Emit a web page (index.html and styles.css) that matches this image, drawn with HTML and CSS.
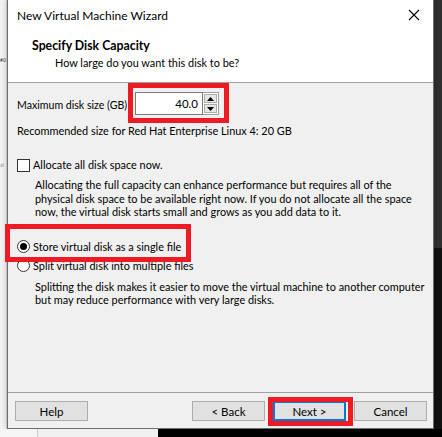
FILE: index.html
```html
<!DOCTYPE html>
<html>
<head>
<meta charset="utf-8">
<link rel="stylesheet" href="styles.css">
</head>
<body>
<div class="screen">
  <div class="bg-left"><span class="frag frag1">#0</span><span class="frag frag2">al</span></div>
  <div class="dialog">
    <div class="titlebar">
      <span class="title">New Virtual Machine Wizard</span>
      <svg class="close" width="12" height="12" viewBox="0 0 12 12"><path d="M1 1 L11 11 M11 1 L1 11" stroke="#000" stroke-width="1.1" fill="none"/></svg>
    </div>
    <div class="header">
      <div class="h-title">Specify Disk Capacity</div>
      <div class="h-sub">How large do you want this disk to be?</div>
    </div>
    <div class="content">
      <div class="row size-row">
        <span class="size-label">Maximum disk size (GB)</span>
        <div class="spinner">
          <div class="spin-input">40.0</div>
          <div class="spin-btns">
            <div class="spin-btn"><svg width="7" height="4" viewBox="0 0 7 4"><path d="M0 4 L3.5 0 L7 4 Z" fill="#000"/></svg></div>
            <div class="spin-btn"><svg width="7" height="4" viewBox="0 0 7 4"><path d="M0 0 L3.5 4 L7 0 Z" fill="#000"/></svg></div>
          </div>
        </div>
      </div>
      <div class="recommended">Recommended size for Red Hat Enterprise Linux 4: 20 GB</div>
      <label class="check-row"><span class="checkbox"></span><span>Allocate all disk space now.</span></label>
      <p class="desc desc1">Allocating the full capacity can enhance performance but requires all of the<br>physical disk space to be available right now. If you do not allocate all the space<br>now, the virtual disk starts small and grows as you add data to it.</p>
      <label class="radio-row radio1"><span class="radio checked"></span><span>Store virtual disk as a single file</span></label>
      <label class="radio-row radio2"><span class="radio"></span><span>Split virtual disk into multiple files</span></label>
      <p class="desc desc2">Splitting the disk makes it easier to move the virtual machine to another computer<br>but may reduce performance with very large disks.</p>
    </div>
    <div class="footer">
      <button class="btn">Help</button>
      <div class="spacer"></div>
      <button class="btn">&lt; Back</button>
      <button class="btn default">Next &gt;</button>
      <button class="btn">Cancel</button>
    </div>
    <div class="mark mark1"></div>
    <div class="mark mark2"></div>
    <div class="mark mark3"></div>
  </div>
  <div class="bg-right"></div>
  <div class="bg-bottom"><div class="bb-light"></div><div class="bb-dark"></div></div>
</div>
</body>
</html>
```
FILE: styles.css
```css
html, body {
  margin: 0;
  padding: 0;
}
body {
  width: 442px;
  height: 437px;
  overflow: hidden;
  font-family: Lato, "Liberation Sans", sans-serif;
  font-size: 10.9px;
  color: #000;
}
.screen {
  display: grid;
  grid-template-columns: 7px 427px 8px;
  grid-template-rows: 429px 8px;
  width: 442px;
  height: 437px;
}
.bg-left {
  grid-column: 1;
  grid-row: 1;
  background: #f3f3f3;
  border-right: 1px solid #d8d8d8;
  position: relative;
}
.frag {
  position: absolute;
  left: 0;
  font-size: 5px;
  line-height: 6px;
  color: #333;
}
.frag1 { top: 57px; }
.frag2 { top: 162px; color: #888; }
.bg-right {
  grid-column: 3;
  grid-row: 1;
  background: linear-gradient(#2f2f2f 0, #2f2f2f 248px, #111 248px);
}
.bg-bottom {
  grid-column: 1 / 4;
  grid-row: 2;
  display: flex;
}
.bb-light {
  width: 158px;
  background: #f0f0f0;
  border-left: 37px solid #f5f5f5;
  box-sizing: border-box;
  position: relative;
}
.bb-light::before {
  content: "";
  position: absolute;
  left: 0;
  top: 0;
  bottom: 0;
  width: 1px;
  background: #cfcfcf;
}
.bb-dark {
  flex: 1;
  background: #000;
}
.dialog {
  grid-column: 2;
  grid-row: 1;
  position: relative;
  display: flex;
  flex-direction: column;
  background: #f0f0f0;
  border: 1px solid #6e6e6e;
  border-top: none;
  box-sizing: border-box;
  box-shadow: 0 0 6px rgba(0,0,0,0.25);
}
.titlebar {
  height: 30px;
  background: #fff;
  display: flex;
  align-items: center;
  padding: 0 9px;
  font-size: 12px;
}
.title {
  flex: 1;
}
.close {
  margin-right: 4px;
}
.header {
  height: 53px;
  background: #fff;
  box-sizing: border-box;
  padding: 8px 0 0 24px;
  border-bottom: 1px solid #a0a0a0;
}
.h-title {
  font-weight: bold;
  font-size: 12.3px;
  line-height: 16px;
}
.h-sub {
  line-height: 16px;
  margin-top: 1px;
  padding-left: 23px;
}
.content {
  height: 310px;
  box-sizing: border-box;
  padding: 9px 0 0 9px;
  border-bottom: 1px solid #a0a0a0;
}
.row {
  display: flex;
  align-items: center;
}
.size-row {
  height: 23px;
}
.size-label {
  flex: 0 0 111px;
  min-width: 0;
  white-space: nowrap;
  padding-top: 3px;
  font-size: 10.6px;
}
.spinner {
  display: flex;
  margin-left: 7px;
  height: 23px;
}
.spin-input {
  width: 68px;
  box-sizing: border-box;
  border: 1px solid #7a7a7a;
  background: #fff;
  text-align: right;
  padding: 1px 4px 0 0;
  line-height: 20px;
  font-size: 11.5px;
}
.spin-btns {
  width: 16px;
  display: flex;
  flex-direction: column;
  gap: 1px;
  padding: 1px 0;
  box-sizing: border-box;
  border: 1px solid #a0a0a0;
  border-left: none;
  background: #fff;
}
.spin-btn {
  flex: 1;
  display: flex;
  align-items: center;
  justify-content: center;
  background: #e5e5e5;
  border: 1px solid #adadad;
  margin: 0 1px;
}
.recommended {
  margin-top: 8px;
  line-height: 16px;
}
.check-row, .radio-row {
  display: flex;
  align-items: center;
  gap: 3px;
  line-height: 16px;
  height: 16px;
}
.check-row {
  margin-top: 18px;
}
.checkbox {
  width: 13px;
  height: 13px;
  box-sizing: border-box;
  border: 1px solid #333;
  background: #fff;
}
.desc {
  margin: 5px 0 0 18px;
  line-height: 13.5px;
  white-space: nowrap;
}
.radio1 {
  margin-top: 20px;
}
.radio2 {
  margin-top: 3px;
}
.radio {
  width: 13px;
  height: 13px;
  box-sizing: border-box;
  border: 1px solid #333;
  border-radius: 50%;
  background: #fff;
  display: flex;
  align-items: center;
  justify-content: center;
}
.radio.checked::after {
  content: "";
  width: 7px;
  height: 7px;
  border-radius: 50%;
  background: #000;
}
.desc2 {
  margin-top: 6px;
}
.footer {
  flex: 1;
  display: flex;
  align-items: flex-start;
  padding: 8px 6px 0 7px;
  gap: 8px;
}
.spacer {
  flex: 1;
}
.btn {
  width: 73px;
  height: 20px;
  box-sizing: border-box;
  border: 1px solid #adadad;
  background: #e1e1e1;
  font: inherit;
  font-size: 11.5px;
  color: #000;
  padding: 0;
  margin: 0;
}
.btn.default {
  border: 2px solid #0078d7;
}
.mark {
  position: absolute;
  border: 5px solid #ed1c24;
  box-sizing: border-box;
}
.mark1 {
  left: 120px;
  top: 83px;
  width: 101px;
  height: 40px;
}
.mark2 {
  left: -3px;
  top: 224px;
  width: 186px;
  height: 38px;
}
.mark3 {
  left: 260px;
  top: 397px;
  width: 85px;
  height: 29px;
}
```
